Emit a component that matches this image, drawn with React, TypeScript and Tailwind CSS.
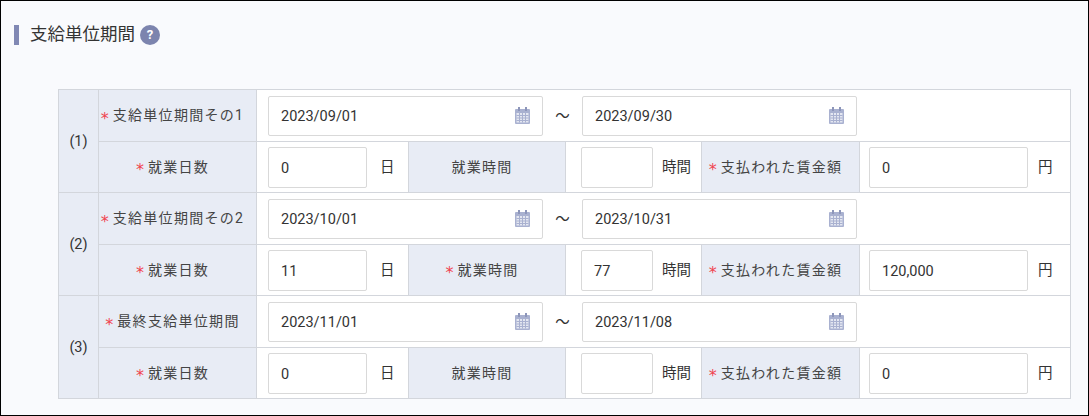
import React from 'react';

function CalendarIcon() {
  return (
    <svg width="15" height="17" viewBox="0 0 15 17" className="absolute right-[12px] top-[10px]">
      <rect x="0" y="2" width="15" height="15" rx="1" fill="#a9b1d0" />
      <rect x="3" y="0" width="2" height="4" fill="#8d96ba" />
      <rect x="10" y="0" width="2" height="4" fill="#8d96ba" />
      <rect x="1.5" y="6" width="12" height="9.5" fill="#e4e7f1" />
      <path d="M1.5 8.5h12M1.5 11h12M1.5 13.500h12M4.500 6v9.500M7.500 6v9.500M10.500 6v9.500" stroke="#a9b1d0" strokeWidth="1" />
    </svg>
  );
}

function Label({ required, children }: { required?: boolean; children: React.ReactNode }) {
  return (
    <span className="inline-flex items-center justify-center pr-[10px]">
      {required && (
        <span className="mr-[4px] translate-y-[3px] text-[16px] leading-none text-[#f0434f]" style={{ fontFamily: '"DejaVu Sans", sans-serif' }}>*</span>
      )}
      <span className="text-[14px] tracking-[1.3px] text-[#444]">{children}</span>
    </span>
  );
}

function DateInput({ value }: { value: string }) {
  return (
    <div className="relative h-[40px] w-[275px] rounded-[2px] border border-[#d9d9d9] bg-white pl-[12px] leading-[40px]">
      {value}
      <CalendarIcon />
    </div>
  );
}

function TextInput({ value, w }: { value: string; w: string }) {
  return (
    <div className={`h-[41px] ${w} rounded-[2px] border border-[#d9d9d9] bg-white pl-[12px] leading-[41px]`}>{value}</div>
  );
}

const rows = [
  { no: '(1)', label: '支給単位期間その1', from: '2023/09/01', to: '2023/09/30', days: '0', hoursReq: false, hours: '', pay: '0' },
  { no: '(2)', label: '支給単位期間その2', from: '2023/10/01', to: '2023/10/31', days: '11', hoursReq: true, hours: '77', pay: '120,000' },
  { no: '(3)', label: '最終支給単位期間', from: '2023/11/01', to: '2023/11/08', days: '0', hoursReq: false, hours: '', pay: '0' },
];

const th = 'border border-[#d3d6dc] bg-[#e8ecf5] text-center font-normal px-0 pb-0 pt-[2px]';
const td = 'border border-[#d3d6dc] bg-white p-0';

export default function App() {
  return (
    <div
      className="h-[416px] w-[1089px] overflow-hidden border border-black bg-[#f9fafd] text-[14.5px] text-[#333]"
      style={{ fontFamily: '"Roboto", "Noto Sans CJK JP", sans-serif' }}
    >
      <div className="flex items-center pl-[13px] pt-[24px]">
        <div className="h-[20px] w-[5px] bg-[#8188b4]" />
        <h2 className="ml-[11px] -translate-y-px text-[17.5px] font-normal leading-[20px]">支給単位期間</h2>
        <div className="ml-[5px] flex h-[20px] w-[20px] items-center justify-center rounded-full bg-[#7c84ae] text-[13px] font-bold text-white">?</div>
      </div>
      <div className="pl-[57px] pt-[44px]">
        <table className="w-[1012px] table-fixed border-collapse">
          <colgroup>
            <col className="w-[40px]" />
            <col className="w-[158px]" />
            <col className="w-[152px]" />
            <col className="w-[157px]" />
            <col className="w-[136px]" />
            <col className="w-[158px]" />
            <col className="w-[211px]" />
          </colgroup>
          <tbody>
            {rows.map((r) => (
              <React.Fragment key={r.no}>
                <tr className="h-[52px]">
                  <th rowSpan={2} className={th}>{r.no}</th>
                  <th className={th}><Label required>{r.label}</Label></th>
                  <td colSpan={5} className={td}>
                    <div className="flex items-center pl-[11px]">
                      <DateInput value={r.from} />
                      <span className="w-[39px] pt-[2px] text-center">〜</span>
                      <DateInput value={r.to} />
                    </div>
                  </td>
                </tr>
                <tr className="h-[51px]">
                  <th className={th}><Label required>就業日数</Label></th>
                  <td className={td}>
                    <div className="flex items-center pl-[11px]">
                      <TextInput value={r.days} w="w-[99px]" />
                      <span className="ml-[13px] pt-[2px]">日</span>
                    </div>
                  </td>
                  <th className={th}><Label required={r.hoursReq}>就業時間</Label></th>
                  <td className={td}>
                    <div className="flex items-center pl-[15px]">
                      <TextInput value={r.hours} w="w-[72px]" />
                      <span className="ml-[9px] pt-[2px]">時間</span>
                    </div>
                  </td>
                  <th className={th}><Label required>支払われた賃金額</Label></th>
                  <td className={td}>
                    <div className="flex items-center pl-[9px]">
                      <TextInput value={r.pay} w="w-[159px]" />
                      <span className="ml-[10px] pt-[2px]">円</span>
                    </div>
                  </td>
                </tr>
              </React.Fragment>
            ))}
          </tbody>
        </table>
      </div>
    </div>
  );
}
